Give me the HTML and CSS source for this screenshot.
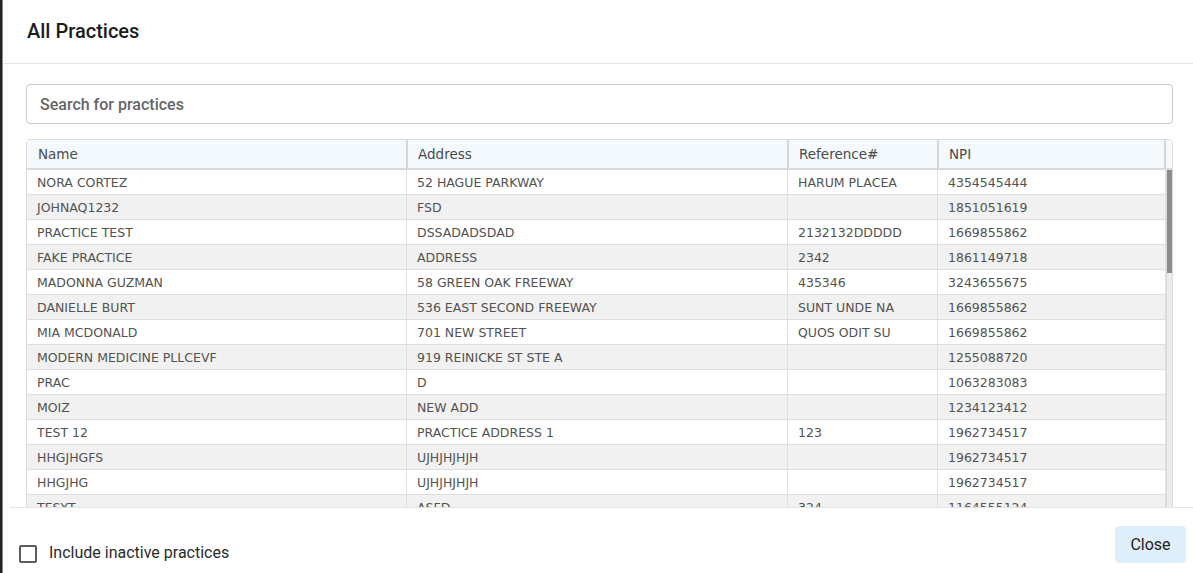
FILE: index.html
```html
<!DOCTYPE html>
<html>
<head>
<meta charset="utf-8">
<link rel="stylesheet" href="styles.css">
</head>
<body>
<div class="modal">
  <header class="modal-header">
    <h1 class="modal-title">All Practices</h1>
  </header>
  <main class="modal-body">
    <input class="search" type="text" placeholder="Search for practices">
    <div class="grid-table">
      <div class="thead">
        <div class="th">Name</div>
        <div class="th">Address</div>
        <div class="th">Reference#</div>
        <div class="th">NPI</div>
        <div class="th stub"></div>
      </div>
      <div class="tbody-wrap">
        <div class="tbody">
          <div class="tr"><div class="td">NORA CORTEZ</div><div class="td">52 HAGUE PARKWAY</div><div class="td">HARUM PLACEA</div><div class="td">4354545444</div></div>
          <div class="tr"><div class="td">JOHNAQ1232</div><div class="td">FSD</div><div class="td"></div><div class="td">1851051619</div></div>
          <div class="tr"><div class="td">PRACTICE TEST</div><div class="td">DSSADADSDAD</div><div class="td">2132132DDDDD</div><div class="td">1669855862</div></div>
          <div class="tr"><div class="td">FAKE PRACTICE</div><div class="td">ADDRESS</div><div class="td">2342</div><div class="td">1861149718</div></div>
          <div class="tr"><div class="td">MADONNA GUZMAN</div><div class="td">58 GREEN OAK FREEWAY</div><div class="td">435346</div><div class="td">3243655675</div></div>
          <div class="tr"><div class="td">DANIELLE BURT</div><div class="td">536 EAST SECOND FREEWAY</div><div class="td">SUNT UNDE NA</div><div class="td">1669855862</div></div>
          <div class="tr"><div class="td">MIA MCDONALD</div><div class="td">701 NEW STREET</div><div class="td">QUOS ODIT SU</div><div class="td">1669855862</div></div>
          <div class="tr"><div class="td">MODERN MEDICINE PLLCEVF</div><div class="td">919 REINICKE ST STE A</div><div class="td"></div><div class="td">1255088720</div></div>
          <div class="tr"><div class="td">PRAC</div><div class="td">D</div><div class="td"></div><div class="td">1063283083</div></div>
          <div class="tr"><div class="td">MOIZ</div><div class="td">NEW ADD</div><div class="td"></div><div class="td">1234123412</div></div>
          <div class="tr"><div class="td">TEST 12</div><div class="td">PRACTICE ADDRESS 1</div><div class="td">123</div><div class="td">1962734517</div></div>
          <div class="tr"><div class="td">HHGJHGFS</div><div class="td">UJHJHJHJH</div><div class="td"></div><div class="td">1962734517</div></div>
          <div class="tr"><div class="td">HHGJHG</div><div class="td">UJHJHJHJH</div><div class="td"></div><div class="td">1962734517</div></div>
          <div class="tr"><div class="td">TESYT</div><div class="td">ASFD</div><div class="td">324</div><div class="td">1164555124</div></div>
          <div class="tr"><div class="td">SAMPLE CLINIC</div><div class="td">12 MAIN STREET</div><div class="td"></div><div class="td">1457896321</div></div>
        </div>
        <div class="scrollbar"><div class="thumb"></div></div>
      </div>
    </div>
  </main>
  <footer class="modal-footer">
    <label class="check">
      <span class="box"></span>
      <span class="check-label">Include inactive practices</span>
    </label>
    <button class="close-btn" type="button">Close</button>
  </footer>
</div>
</body>
</html>
```
FILE: styles.css
```css
* { box-sizing: border-box; }
html, body { height: 100%; }
body {
  margin: 0;
  background: #1f2226;
  overflow: hidden;
  font-family: Roboto, "Liberation Sans", sans-serif;
}
.modal {
  margin-left: 2px;
  height: 573px;
  background: #fff;
  display: flex;
  flex-direction: column;
  border-left: 1px solid #8a8a8a;
}
.modal-header {
  height: 64px;
  flex: none;
  border-bottom: 1px solid #e6e6e6;
  padding: 0 24px;
  display: flex;
  align-items: center;
}
.modal-title {
  margin: 0;
  font-size: 20px;
  font-weight: 500;
  color: #1c1c1c;
  padding-bottom: 2px;
}
.modal-body {
  flex: 1;
  min-height: 0;
  overflow: hidden;
  padding: 20px 20px 0 23px;
}
.search {
  display: block;
  width: 100%;
  height: 40px;
  border: 1px solid #c8c8c8;
  border-radius: 4px;
  padding: 0 13px;
  font-family: Roboto, "Liberation Sans", sans-serif;
  font-size: 16px;
  font-weight: 500;
  color: #333;
  outline: none;
}
.search::placeholder { color: #666; }
.grid-table {
  margin-top: 15px;
  border: 1px solid #dcdcdc;
  border-radius: 4px 4px 0 0;
  font-family: "DejaVu Sans", sans-serif;
  color: #525252;
}
.thead {
  display: grid;
  grid-template-columns: 381px 381px 150px 1fr 6px;
  background: #f4f9fd;
  border-bottom: 2px solid #dadada;
  height: 30px;
}
.th {
  display: flex;
  align-items: center;
  padding-left: 10px;
  font-size: 13.5px;
  color: #4a4a4a;
  border-right: 2px solid #d6d6d6;
}
.th:first-child { padding-left: 11px; }
.th.stub { padding: 0; border-right: none; background: #f4f9fd; }
.tbody-wrap {
  display: flex;
}
.tbody { flex: 1; }
.tr {
  display: grid;
  grid-template-columns: 380px 381px 150px 1fr;
  height: 25px;
  border-bottom: 1px solid #dedede;
}
.tr:nth-child(even) { background: #f1f1f1; }
.td {
  display: flex;
  align-items: center;
  padding-left: 10px;
  font-size: 12.5px;
  border-right: 1px solid #dedede;
  white-space: nowrap;
  overflow: hidden;
}
.scrollbar {
  width: 6px;
  background: #ececec;
  border-left: 1px solid #dcdcdc;
}
.thumb {
  height: 103px;
  background: #8c8c8c;
}
.modal-footer {
  flex: none;
  height: 66px;
  margin-left: 7px;
  border-top: 1px solid #e3e3e3;
  background: #fff;
  display: flex;
  align-items: flex-end;
  justify-content: space-between;
  padding: 0 7px 10px 9px;
}
.check {
  display: flex;
  align-items: center;
  gap: 12px;
  height: 22px;
}
.box {
  width: 18px;
  height: 18px;
  border: 2px solid #5c5c5c;
  border-radius: 2px;
  margin-top: 3px;
}
.check-label {
  font-size: 16px;
  color: #2b2b2b;
}
.close-btn {
  width: 71px;
  height: 37px;
  border: none;
  border-radius: 4px;
  background: #deeefb;
  font-family: Roboto, "Liberation Sans", sans-serif;
  font-size: 16px;
  color: #222;
  cursor: pointer;
}
```
